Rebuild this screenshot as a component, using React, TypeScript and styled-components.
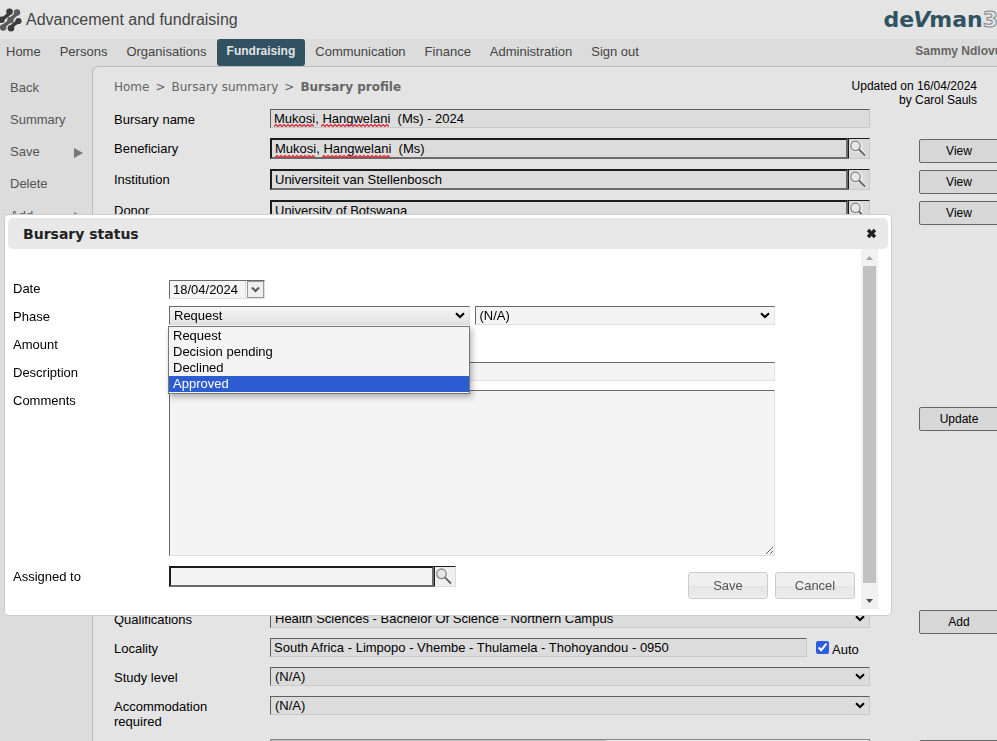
import React, { useState } from "react";
import styled, { createGlobalStyle, css } from "styled-components";

const sans = `"Liberation Sans", Arial, Helvetica, sans-serif`;
const wide = `"DejaVu Sans", Verdana, sans-serif`;

const GlobalStyle = createGlobalStyle`
  * { box-sizing: border-box; }
  body { margin: 0; background: #e4e4e4; font: 13px/15px ${sans}; color: #000; }
  input, select, textarea, button { font: inherit; color: inherit; margin: 0; border-radius: 0; outline: none; }
`;

const Page = styled.div`
  height: 100vh;
  overflow: hidden;
  display: flex;
  flex-direction: column;
`;

const Header = styled.header`
  display: flex;
  align-items: center;
  height: 39px;
  flex: none;
`;

const AppTitle = styled.h1`
  flex: 1;
  margin: 0 0 0 4px;
  font-size: 16px;
  line-height: 20px;
  font-weight: normal;
  color: #444;
`;

const Brand = styled.div`
  display: flex;
  align-items: baseline;
  margin-right: -1px;
  font: bold 22px/26px ${wide};
  color: #315260;
`;

const BrandSlant = styled.span`
  font-style: italic;
  margin: 0 -1px;
`;

const BrandOutline = styled.span`
  color: #e4e4e4;
  -webkit-text-stroke: 1px #888;
`;

const Nav = styled.nav`
  display: flex;
  flex: none;
  height: 27px;
  gap: 1px;
  margin-left: -3px;
  background: #dcdcdc;
`;

const NavLink = styled.a<{ $active?: boolean }>`
  padding: 0 9px;
  line-height: 25px;
  color: #444;
  text-decoration: none;
  ${(p) =>
    p.$active &&
    css`
      padding: 0 10px;
      background: #315262;
      color: #e4e4e4;
      border-radius: 3px;
      font-weight: bold;
      font-size: 12px;
    `}
`;

const UserName = styled.span`
  margin-left: auto;
  margin-right: -5px;
  font-size: 12px;
  font-weight: bold;
  line-height: 24px;
  color: #666;
  white-space: nowrap;
`;

const Body = styled.div`
  display: flex;
  flex: 1;
  min-height: 0;
  background: #dcdcdc;
`;

const Sidebar = styled.aside`
  width: 92px;
  flex: none;
  display: flex;
  flex-direction: column;
  padding-top: 5px;
`;

const SideLink = styled.a`
  display: flex;
  align-items: center;
  justify-content: space-between;
  height: 32px;
  padding: 0 9px 0 10px;
  color: #555;
  text-decoration: none;
`;

const MoreArrow = styled.svg`
  margin-top: 3px;
`;

const Main = styled.main`
  flex: 1;
  min-width: 0;
  padding: 12px 0 0 21px;
  background: #e4e4e4;
  border: solid #bbb;
  border-width: 1px 0 0 1px;
  border-top-left-radius: 6px;
`;

const TopLine = styled.div`
  display: flex;
  justify-content: space-between;
  padding-right: 20px;
  margin-bottom: 2px;
`;

const Crumbs = styled.div`
  display: flex;
  gap: 6px;
  padding-top: 1px;
  font-family: ${wide};
  font-size: 12px;
  color: #666;
`;

const CrumbLink = styled.a`
  color: inherit;
  text-decoration: none;
`;

const Updated = styled.div`
  font-size: 12px;
  line-height: 14px;
  text-align: right;
`;

const Row = styled.div<{ $before?: number }>`
  display: flex;
  align-items: flex-start;
  min-height: 29px;
  margin-top: ${(p) => p.$before ?? 0}px;
`;

const Label = styled.label`
  width: 156px;
  flex: none;
  padding: 3px 40px 10px 0;
`;

const Field = styled.div`
  flex: 1;
  min-width: 0;
  display: flex;
  margin: 0 0 10px;
  position: relative;
`;

const Actions = styled.div`
  flex: none;
  width: 129px;
  margin-right: -2px;
  padding: 1px 0 0 49px;
`;

const ActionButton = styled.button`
  display: block;
  width: 100%;
  height: 24px;
  padding: 0;
  font-size: 12px;
  background: #d7d7d7;
  border: 1px solid #666;
  border-radius: 2px;
`;

type Tone = { $light?: boolean };

const thinBox = css<Tone>`
  background: ${(p) => (p.$light ? "#f4f4f4" : "#dcdcdc")};
  border: 1px solid;
  border-color: ${(p) => (p.$light ? "#6a6a6a #e0e0e0 #e0e0e0 #6a6a6a" : "#5f5f5f #c9c9c9 #c9c9c9 #5f5f5f")};
`;

const TextInput = styled.input<Tone & { $short?: boolean }>`
  ${thinBox}
  flex: ${(p) => (p.$short ? "0 0 96px" : "1")};
  min-width: 0;
  height: 19px;
  padding: 0 3px;
`;

const LookupInput = styled.input<Tone>`
  flex: 1;
  min-width: 0;
  height: 21px;
  padding: 0 3px;
  background: ${(p) => (p.$light ? "#f4f4f4" : "#dcdcdc")};
  border: 2px solid;
  border-color: #1c1c1c #6b6b6b #6b6b6b #1c1c1c;
`;

const LookupButton = styled.button<Tone>`
  width: 22px;
  height: 21px;
  padding: 0;
  display: flex;
  background: ${(p) => (p.$light ? "#efefef" : "#d9d9d9")};
  border: 1px solid;
  border-color: ${(p) => (p.$light ? "#1c1c1c #ddd #ddd #1c1c1c" : "#1c1c1c #c9c9c9 #c9c9c9 #1c1c1c")};
`;

const SelectWrap = styled.div`
  position: relative;
  flex: 1;
  min-width: 0;
  display: flex;
`;

const SelectBox = styled.select<Tone & { $open?: boolean }>`
  ${thinBox}
  appearance: none;
  width: 100%;
  height: 19px;
  padding: 0 20px 0 4px;
  line-height: 17px;
  ${(p) => p.$open && css`background: linear-gradient(#f5f5f5, #e2e2e2);`}
`;

const Chevron = styled.svg`
  position: absolute;
  right: 5px;
  top: 6px;
  pointer-events: none;
`;

const Wave = styled.svg<{ $left: number }>`
  position: absolute;
  left: ${(p) => p.$left}px;
  bottom: 1px;
  pointer-events: none;
`;

const CheckLabel = styled.label`
  display: flex;
  align-items: center;
  gap: 3px;
  width: 63px;
  padding: 4px 0 0 9px;
  height: 19px;
`;

const Check = styled.input`
  && {
    width: 13px;
    height: 13px;
    flex: none;
    margin-bottom: 4px;
    accent-color: #2b5fe0;
  }
`;

const ListBox = styled.div`
  flex: 1;
  height: 60px;
  border: 1px solid #888;
  background: #e9e9e9;
`;

const ListHead = styled.div`
  width: 56%;
  height: 20px;
  background: #bbb;
`;

const Dialog = styled.section`
  position: fixed;
  top: 215px;
  left: 5px;
  right: 106px;
  padding: 3px 3px 6px 3px;
  background: #fff;
  border-radius: 4px;
  box-shadow: 0 0 0 1px #cdcdcd;
`;

const DialogHead = styled.div`
  display: flex;
  align-items: center;
  height: 31px;
  padding: 0 11px 0 15px;
  background: #e8e8e8;
  border-radius: 5px;
`;

const DialogTitle = styled.h2`
  flex: 1;
  margin: 0;
  font: bold 14px/18px ${wide};
  color: #222;
`;

const CloseButton = styled.button`
  display: flex;
  padding: 0;
  border: 0;
  background: none;
`;

const DialogBody = styled.div`
  display: flex;
  padding-right: 10px;
`;

const DialogForm = styled.form`
  flex: 1;
  min-width: 0;
  padding: 29px 6px 10px 5px;
  display: flex;
  flex-direction: column;
`;

const DRow = styled.div`
  display: flex;
  align-items: flex-start;
  padding-right: 80px;
`;

const DLabel = styled.label`
  width: 156px;
  flex: none;
  padding: 3px 0 0;
`;

const DField = styled.div<{ $gap: number }>`
  flex: 1;
  min-width: 0;
  min-height: 19px;
  display: flex;
  gap: 5px;
  margin-bottom: ${(p) => p.$gap}px;
`;

const DateBox = styled.div<Tone>`
  ${thinBox}
  display: flex;
  width: 96px;
  height: 19px;
  margin-top: 2px;
`;

const DateInput = styled.input`
  flex: 1;
  min-width: 0;
  padding: 0 3px;
  border: 0;
  border-right: 1px solid #ddd;
  background: transparent;
`;

const DateButton = styled.button`
  width: 17px;
  height: 17px;
  margin-left: 1px;
  padding: 0;
  display: flex;
  align-items: center;
  justify-content: center;
  border: 1px solid #999;
  background: #eee;
`;

const CommentBox = styled.textarea<Tone>`
  ${thinBox}
  flex: 1;
  height: 166px;
  resize: vertical;
`;

const Lookup = styled.div`
  display: flex;
  width: 287px;
`;

const OptionList = styled.ul`
  position: absolute;
  z-index: 1;
  top: 20px;
  left: -1px;
  right: 0;
  margin: 0;
  padding: 1px 0;
  list-style: none;
  border: 1px solid #777;
  background: #f4f4f4;
  box-shadow: 2px 3px 6px rgba(0, 0, 0, 0.3);
`;

const Option = styled.li<{ $on: boolean }>`
  padding: 0 4px;
  line-height: 16px;
  background: ${(p) => (p.$on ? "#2b5dd1" : "transparent")};
  color: ${(p) => (p.$on ? "#fff" : "#000")};
`;

const Buttons = styled.div`
  display: flex;
  justify-content: flex-end;
  gap: 7px;
  margin-top: -15px;
`;

const DialogButton = styled.button`
  width: 80px;
  height: 27px;
  padding: 0;
  color: #555;
  border: 1px solid #ccc;
  border-radius: 3px;
  background: linear-gradient(#efefef 50%, #e5e5e5 50%, #ececec);
`;

const ScrollTrack = styled.div`
  width: 17px;
  display: flex;
  flex-direction: column;
  align-items: center;
  background: #f1f1f1;
`;

const ScrollEnd = styled.div`
  height: 17px;
  display: flex;
  align-items: center;
`;

const ScrollThumb = styled.div`
  width: 13px;
  flex: 1;
  margin-bottom: 9px;
  background: #c1c1c1;
`;

function LogoMark() {
  return (
    <svg width="22" height="24" viewBox="0 0 22 24" aria-hidden="true">
      <g fill="none" strokeWidth="3.6" strokeLinecap="round">
        <path d="M9.500 4.500 C8 9 5 8 1.500 12" stroke="#3c3c3c" />
        <path d="M18.500 13 C16 16 13 15 11 20" stroke="#3c3c3c" />
        <path d="M17 4.500 C15 9 13 8 10.500 12 C8 16 6 15 3.200 19" stroke="#5b5b5b" />
      </g>
      <g fill="#3c3c3c">
        <circle cx="9.500" cy="3.800" r="3.300" />
        <circle cx="1.500" cy="11.800" r="3.200" />
        <circle cx="18.500" cy="13" r="3.100" />
        <circle cx="11" cy="20.200" r="3.300" />
      </g>
      <g fill="#5b5b5b">
        <circle cx="17" cy="4.500" r="3.200" />
        <circle cx="10.500" cy="12" r="3.200" />
        <circle cx="3.200" cy="19.500" r="3.200" />
      </g>
    </svg>
  );
}

function Arrow() {
  return (
    <Chevron width="10" height="7" viewBox="0 0 10 7" aria-hidden="true">
      <path d="M1 1.200 L5 5 L9 1.200" fill="none" stroke="#000" strokeWidth="2" />
    </Chevron>
  );
}

function Magnifier() {
  return (
    <svg width="19" height="19" viewBox="1 1 19 19" aria-hidden="true">
      <circle cx="8" cy="8" r="5.500" fill="#e6e6e6" stroke="#f4f4f4" strokeWidth="2" />
      <circle cx="7.500" cy="7.800" r="4.800" fill="none" stroke="#888" strokeWidth="1.300" />
      <path d="M12 12 L17 17" stroke="#f4f4f4" strokeWidth="3.500" />
      <path d="M11 11.500 L17 17.500" stroke="#666" strokeWidth="1.800" />
    </svg>
  );
}

function SpellMark({ left, width }: { left: number; width: number }) {
  let d = "M0 2.500";
  for (let x = 2; x <= width; x += 2) d += ` L${x} ${x % 4 === 2 ? 0.5 : 2.5}`;
  return (
    <Wave $left={left} width={width} height="3" aria-hidden="true">
      <path d={d} fill="none" stroke="#e02a3a" strokeWidth="1.300" />
    </Wave>
  );
}

function SelectField({ id, value, light }: { id: string; value: string; light?: boolean }) {
  return (
    <SelectWrap>
      <SelectBox id={id} $light={light} defaultValue={value} aria-label={id}>
        <option>{value}</option>
      </SelectBox>
      <Arrow />
    </SelectWrap>
  );
}

function LookupRow({ label, value, children }: { label: string; value: string; children?: React.ReactNode }) {
  return (
    <Row>
      <Label htmlFor={label}>{label}</Label>
      <Field>
        <LookupInput id={label} defaultValue={value} spellCheck={false} />
        <LookupButton type="button" aria-label={`Find ${label}`}>
          <Magnifier />
        </LookupButton>
        {children}
      </Field>
      <Actions>
        <ActionButton>View</ActionButton>
      </Actions>
    </Row>
  );
}

const phases = ["Request", "Decision pending", "Declined", "Approved"];

function StatusDialog() {
  const [hovered, setHovered] = useState("Approved");
  return (
    <Dialog role="dialog" aria-labelledby="dialog-title">
      <DialogHead>
        <DialogTitle id="dialog-title">Bursary status</DialogTitle>
        <CloseButton aria-label="Close">
          <svg width="11" height="11" viewBox="0 0 11 11" aria-hidden="true">
            <path d="M2 2 L9 9 M9 2 L2 9" stroke="#222" strokeWidth="3.400" />
          </svg>
        </CloseButton>
      </DialogHead>
      <DialogBody>
        <DialogForm onSubmit={(e) => e.preventDefault()}>
          <DRow>
            <DLabel htmlFor="date">Date</DLabel>
            <DField $gap={7}>
              <DateBox $light>
                <DateInput id="date" defaultValue="18/04/2024" />
                <DateButton type="button" aria-label="Pick a date">
                  <svg width="9" height="7" viewBox="0 0 9 7" aria-hidden="true">
                    <path d="M1 1.500 L4.500 5 L8 1.500" fill="none" stroke="#555" strokeWidth="2" />
                  </svg>
                </DateButton>
              </DateBox>
            </DField>
          </DRow>
          <DRow>
            <DLabel htmlFor="phase">Phase</DLabel>
            <DField $gap={9}>
              <SelectWrap>
                <SelectBox id="phase" $light $open defaultValue="Request">
                  {phases.map((p) => (
                    <option key={p}>{p}</option>
                  ))}
                </SelectBox>
                <Arrow />
                <OptionList role="listbox" aria-label="Phase">
                  {phases.map((p) => (
                    <Option key={p} role="option" aria-selected={p === hovered} $on={p === hovered} onMouseEnter={() => setHovered(p)}>
                      {p}
                    </Option>
                  ))}
                </OptionList>
              </SelectWrap>
              <SelectField id="Outcome" value="(N/A)" light />
            </DField>
          </DRow>
          <DRow>
            <DLabel htmlFor="amount">Amount</DLabel>
            <DField $gap={9}>
              <TextInput id="amount" $light $short />
            </DField>
          </DRow>
          <DRow>
            <DLabel htmlFor="description">Description</DLabel>
            <DField $gap={9}>
              <TextInput id="description" $light />
            </DField>
          </DRow>
          <DRow>
            <DLabel htmlFor="comments">Comments</DLabel>
            <DField $gap={10}>
              <CommentBox id="comments" $light />
            </DField>
          </DRow>
          <DRow>
            <DLabel htmlFor="assigned">Assigned to</DLabel>
            <DField $gap={0}>
              <Lookup>
                <LookupInput id="assigned" $light />
                <LookupButton type="button" $light aria-label="Find person">
                  <Magnifier />
                </LookupButton>
              </Lookup>
            </DField>
          </DRow>
          <Buttons>
            <DialogButton>Save</DialogButton>
            <DialogButton type="button">Cancel</DialogButton>
          </Buttons>
        </DialogForm>
        <ScrollTrack>
          <ScrollEnd>
            <svg width="7" height="4" viewBox="0 0 7 4" aria-hidden="true">
              <path d="M0 4 L3.500 0 L7 4Z" fill="#a3a3a3" />
            </svg>
          </ScrollEnd>
          <ScrollThumb />
          <ScrollEnd>
            <svg width="7" height="4" viewBox="0 0 7 4" aria-hidden="true">
              <path d="M0 0 L3.500 4 L7 0Z" fill="#505050" />
            </svg>
          </ScrollEnd>
        </ScrollTrack>
      </DialogBody>
    </Dialog>
  );
}

const navItems = ["Home", "Persons", "Organisations", "Fundraising", "Communication", "Finance", "Administration", "Sign out"];

const sideItems = [
  { name: "Back" },
  { name: "Summary" },
  { name: "Save", more: true },
  { name: "Delete" },
  { name: "Add", more: true },
];

export default function App() {
  return (
    <>
      <GlobalStyle />
      <Page>
        <Header>
          <LogoMark />
          <AppTitle>Advancement and fundraising</AppTitle>
          <Brand>
            de<BrandSlant>V</BrandSlant>man<BrandOutline>3</BrandOutline>
          </Brand>
        </Header>
        <Nav>
          {navItems.map((n) => (
            <NavLink key={n} href="#" $active={n === "Fundraising"}>
              {n}
            </NavLink>
          ))}
          <UserName>Sammy Ndlovu</UserName>
        </Nav>
        <Body>
          <Sidebar>
            {sideItems.map((s) => (
              <SideLink key={s.name} href="#">
                {s.name}
                {s.more && (
                  <MoreArrow width="9" height="10" viewBox="0 0 9 10" aria-hidden="true">
                    <path d="M0 0 L9 5 L0 10Z" fill="#777" />
                  </MoreArrow>
                )}
              </SideLink>
            ))}
          </Sidebar>
          <Main>
            <TopLine>
              <Crumbs>
                <CrumbLink href="#">Home</CrumbLink>
                <span>&gt;</span>
                <CrumbLink href="#">Bursary summary</CrumbLink>
                <span>&gt;</span>
                <b>Bursary profile</b>
              </Crumbs>
              <Updated>
                Updated on 16/04/2024
                <br />
                by Carol Sauls
              </Updated>
            </TopLine>
            <Row>
              <Label htmlFor="name">Bursary name</Label>
              <Field>
                <TextInput id="name" defaultValue="Mukosi, Hangwelani  (Ms) - 2024" spellCheck={false} />
                <SpellMark left={4} width={40} />
                <SpellMark left={51} width={68} />
              </Field>
              <Actions />
            </Row>
            <LookupRow label="Beneficiary" value="Mukosi, Hangwelani  (Ms)">
              <SpellMark left={5} width={40} />
              <SpellMark left={52} width={68} />
            </LookupRow>
            <LookupRow label="Institution" value="Universiteit van Stellenbosch" />
            <LookupRow label="Donor" value="University of Botswana" />
            <Row $before={175}>
              <Field />
              <Actions>
                <ActionButton>Update</ActionButton>
              </Actions>
            </Row>
            <Row $before={174}>
              <Label htmlFor="Qualifications">Qualifications</Label>
              <Field>
                <SelectField id="Qualifications" value="Health Sciences - Bachelor Of Science - Northern Campus" />
              </Field>
              <Actions>
                <ActionButton>Add</ActionButton>
              </Actions>
            </Row>
            <Row>
              <Label htmlFor="locality">Locality</Label>
              <Field>
                <TextInput id="locality" defaultValue="South Africa - Limpopo - Vhembe - Thulamela - Thohoyandou - 0950" />
                <CheckLabel>
                  <Check type="checkbox" defaultChecked />
                  Auto
                </CheckLabel>
              </Field>
              <Actions />
            </Row>
            <Row>
              <Label htmlFor="Study level">Study level</Label>
              <Field>
                <SelectField id="Study level" value="(N/A)" />
              </Field>
              <Actions />
            </Row>
            <Row>
              <Label htmlFor="Accommodation required">Accommodation required</Label>
              <Field>
                <SelectField id="Accommodation required" value="(N/A)" />
              </Field>
              <Actions />
            </Row>
            <Row>
              <Label />
              <Field>
                <ListBox>
                  <ListHead />
                </ListBox>
              </Field>
              <Actions>
                <ActionButton aria-label="Add entry" />
              </Actions>
            </Row>
          </Main>
        </Body>
      </Page>
      <StatusDialog />
    </>
  );
}
